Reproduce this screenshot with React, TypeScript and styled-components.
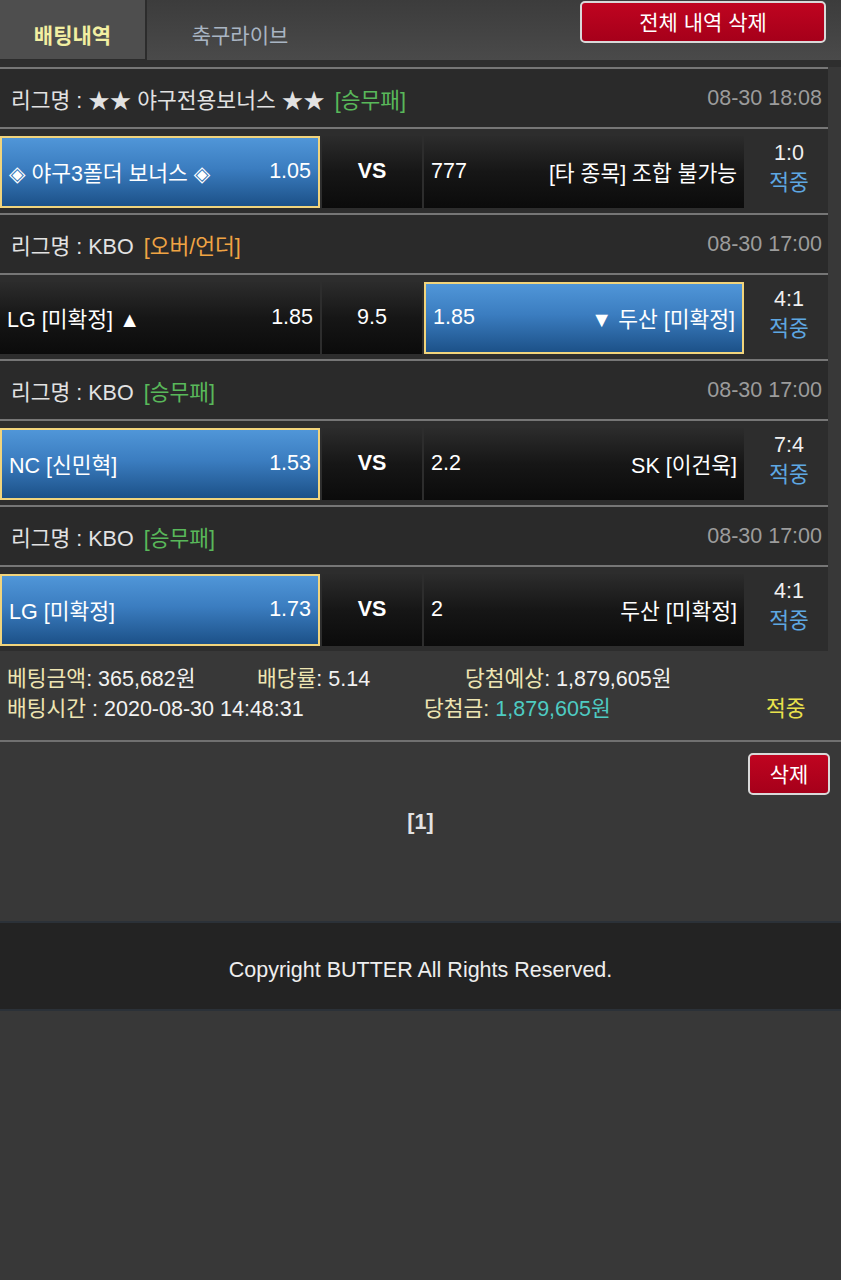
import styled, { createGlobalStyle } from "styled-components";

const GlobalStyle = createGlobalStyle`
  html, body {
    margin: 0;
    padding: 0;
    background: #383838;
  }
  body {
    font-family: "Liberation Sans", "Noto Sans CJK KR", "DejaVu Sans", sans-serif;
    font-size: 21.5px;
    color: #e6e6e6;
  }
  * {
    box-sizing: border-box;
  }
`;

const Page = styled.div`
  width: 841px;
  min-height: 1280px;
  background: #383838;
  display: flex;
  flex-direction: column;
`;

const TopBar = styled.div`
  height: 60px;
  display: flex;
  align-items: flex-start;
  background: linear-gradient(to bottom, #3c3c3c, #4a4a4a);
`;

const Tab = styled.div<{ active?: boolean }>`
  width: ${(p) => (p.active ? "147px" : "186px")};
  height: 60px;
  display: flex;
  align-items: center;
  justify-content: center;
  padding-top: 8px;
  font-size: 21px;
  font-weight: ${(p) => (p.active ? 700 : 400)};
  color: ${(p) => (p.active ? "#f2efa2" : "#a9b5c3")};
  background: ${(p) => (p.active ? "#4e4e4e" : "transparent")};
  border-right: ${(p) => (p.active ? "2px solid #2c2c2c" : "none")};
  border-bottom: ${(p) => (p.active ? "1px solid #2c2c2c" : "none")};
`;

const Spacer = styled.div`
  flex: 1;
`;

const RedButton = styled.button<{ wide?: boolean }>`
  width: ${(p) => (p.wide ? "246px" : "82px")};
  height: 42px;
  margin-top: ${(p) => (p.wide ? "1px" : "0")};
  margin-right: ${(p) => (p.wide ? "15px" : "11px")};
  border: 2px solid #d9d9d9;
  border-radius: 5px;
  background: linear-gradient(to bottom, #bf0420, #a6001a);
  color: #ffffff;
  font-family: "Liberation Sans", "Noto Sans CJK KR", sans-serif;
  font-size: 21px;
  padding: 0 0 2px 0;
  display: flex;
  align-items: center;
  justify-content: center;
`;

const DarkBand = styled.div`
  height: 7px;
  background: #2e2e2e;
`;

const List = styled.div`
  width: 828px;
  display: flex;
  flex-direction: column;
`;

const LeagueHeader = styled.div`
  height: 62px;
  border-top: 2px solid #767676;
  border-bottom: 2px solid #767676;
  background: #2a2a2a;
  display: flex;
  align-items: center;
  padding: 0 6px 0 11px;
`;

const LeagueName = styled.span`
  color: #e2e2e2;
`;

const Market = styled.span<{ tone: "green" | "orange" }>`
  margin-left: 10px;
  color: ${(p) => (p.tone === "green" ? "#59b85a" : "#f0a444")};
`;

const DateText = styled.span`
  margin-left: auto;
  color: #9c9c9c;
`;

const MatchRow = styled.div`
  background: #2d2d2d;
  padding: 7px 0 5px 0;
  display: flex;
  gap: 2px;
  height: 84px;
`;

const Cell = styled.div<{ selected?: boolean; w: number }>`
  width: ${(p) => p.w}px;
  height: 72px;
  display: flex;
  align-items: center;
  justify-content: space-between;
  padding: 0 7px 2px 7px;
  color: #ffffff;
  border: ${(p) => (p.selected ? "2px solid #f1d47c" : "none")};
  background: ${(p) =>
    p.selected
      ? "linear-gradient(to bottom, #5096d8 0%, #3b7dc0 45%, #1c5188 100%)"
      : "linear-gradient(to bottom, #2c2c2c 0%, #161616 50%, #0b0b0b 100%)"};
`;

const Middle = styled(Cell)<{ bold?: boolean }>`
  justify-content: center;
  font-weight: ${(p) => (p.bold ? 700 : 400)};
`;

const Result = styled.div`
  flex: 1;
  height: 72px;
  display: flex;
  flex-direction: column;
  align-items: center;
  justify-content: center;
  line-height: 30px;
  padding: 0 0 8px 4px;
`;

const Score = styled.span`
  color: #f0f0f0;
`;

const Hit = styled.span`
  color: #5ea7e2;
`;

const Summary = styled.div`
  padding: 10px 0 19px 7px;
  border-bottom: 2px solid #707070;
  display: flex;
  flex-direction: column;
`;

const SummaryLine = styled.div`
  display: flex;
  height: 30px;
  align-items: center;
`;

const SummaryItem = styled.div<{ w?: number }>`
  width: ${(p) => (p.w ? `${p.w}px` : "auto")};
  white-space: nowrap;
`;

const Label = styled.span`
  color: #eee5b2;
`;

const Value = styled.span<{ tone?: "cyan" | "yellow" }>`
  color: ${(p) =>
    p.tone === "cyan" ? "#4ecbc2" : p.tone === "yellow" ? "#e9e24c" : "#f2f2f2"};
`;

const ActionRow = styled.div`
  display: flex;
  justify-content: flex-end;
  padding-top: 11px;
`;

const Pager = styled.div`
  text-align: center;
  font-weight: 700;
  color: #e2e2e2;
  margin-top: 15px;
`;

const Footer = styled.div`
  margin-top: 86px;
  height: 90px;
  border-top: 2px solid #2b3138;
  border-bottom: 2px solid #2b3138;
  background: #232323;
  display: flex;
  align-items: center;
  justify-content: center;
  padding-top: 8px;
  color: #eeeeee;
`;

type Side = { name: string; odds: string; selected?: boolean };
type Bet = {
  league: string;
  market: string;
  tone: "green" | "orange";
  date: string;
  home: Side;
  middle: string;
  away: Side;
  score: string;
};

const bets: Bet[] = [
  {
    league: "리그명 : ★★ 야구전용보너스 ★★",
    market: "[승무패]",
    tone: "green",
    date: "08-30 18:08",
    home: { name: "◈ 야구3폴더 보너스 ◈", odds: "1.05", selected: true },
    middle: "VS",
    away: { name: "[타 종목] 조합 불가능", odds: "777" },
    score: "1:0",
  },
  {
    league: "리그명 : KBO",
    market: "[오버/언더]",
    tone: "orange",
    date: "08-30 17:00",
    home: { name: "LG [미확정] ▲", odds: "1.85" },
    middle: "9.5",
    away: { name: "▼ 두산 [미확정]", odds: "1.85", selected: true },
    score: "4:1",
  },
  {
    league: "리그명 : KBO",
    market: "[승무패]",
    tone: "green",
    date: "08-30 17:00",
    home: { name: "NC [신민혁]", odds: "1.53", selected: true },
    middle: "VS",
    away: { name: "SK [이건욱]", odds: "2.2" },
    score: "7:4",
  },
  {
    league: "리그명 : KBO",
    market: "[승무패]",
    tone: "green",
    date: "08-30 17:00",
    home: { name: "LG [미확정]", odds: "1.73", selected: true },
    middle: "VS",
    away: { name: "두산 [미확정]", odds: "2" },
    score: "4:1",
  },
];

export default function App() {
  return (
    <Page>
      <GlobalStyle />
      <TopBar>
        <Tab active>배팅내역</Tab>
        <Tab>축구라이브</Tab>
        <Spacer />
        <RedButton wide>전체 내역 삭제</RedButton>
      </TopBar>
      <DarkBand />

      <List>
        {bets.map((b, i) => (
          <div key={i}>
            <LeagueHeader>
              <LeagueName>{b.league}</LeagueName>
              <Market tone={b.tone}>{b.market}</Market>
              <DateText>{b.date}</DateText>
            </LeagueHeader>
            <MatchRow>
              <Cell w={320} selected={b.home.selected}>
                <span>{b.home.name}</span>
                <span>{b.home.odds}</span>
              </Cell>
              <Middle w={100} bold={b.middle === "VS"}>
                {b.middle}
              </Middle>
              <Cell w={320} selected={b.away.selected}>
                <span>{b.away.odds}</span>
                <span>{b.away.name}</span>
              </Cell>
              <Result>
                <Score>{b.score}</Score>
                <Hit>적중</Hit>
              </Result>
            </MatchRow>
          </div>
        ))}
      </List>

      <Summary>
        <SummaryLine>
          <SummaryItem w={250}>
            <Label>베팅금액</Label>
            <Value>: 365,682원</Value>
          </SummaryItem>
          <SummaryItem w={208}>
            <Label>배당률</Label>
            <Value>: 5.14</Value>
          </SummaryItem>
          <SummaryItem>
            <Label>당첨예상</Label>
            <Value>: 1,879,605원</Value>
          </SummaryItem>
        </SummaryLine>
        <SummaryLine>
          <SummaryItem w={417}>
            <Label>배팅시간</Label>
            <Value> : 2020-08-30 14:48:31</Value>
          </SummaryItem>
          <SummaryItem w={342}>
            <Label>당첨금</Label>
            <Label>: </Label>
            <Value tone="cyan">1,879,605원</Value>
          </SummaryItem>
          <SummaryItem>
            <Value tone="yellow">적중</Value>
          </SummaryItem>
        </SummaryLine>
      </Summary>

      <ActionRow>
        <RedButton>삭제</RedButton>
      </ActionRow>

      <Pager>[1]</Pager>

      <Footer>Copyright BUTTER All Rights Reserved.</Footer>
    </Page>
  );
}
